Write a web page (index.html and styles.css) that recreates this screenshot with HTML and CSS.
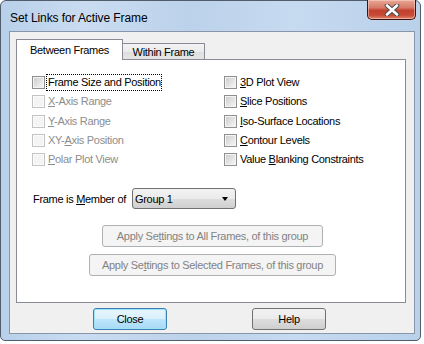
FILE: index.html
```html
<!DOCTYPE html>
<html lang="en">

<head>
    <meta charset="UTF-8">
    <meta name="viewport" content="width=device-width, initial-scale=1.0">
    <title>Set Links for Active Frame</title>
    <link rel="stylesheet" href="styles.css">
</head>

<body>

    <div class="janela">
        <div class="barra-titulo">
            <span class="titulo">Set Links for Active Frame</span>
            <div class="botao-fechar-janela">
                <svg width="20" height="12" viewBox="0 0 20 12">
                    <path d="M5 1.5 L15 10.5 M15 1.5 L5 10.5" stroke="#4a4a4a" stroke-width="4.6" stroke-linecap="round" />
                    <path d="M5 1.5 L15 10.5 M15 1.5 L5 10.5" stroke="#ffffff" stroke-width="2.6" stroke-linecap="round" />
                </svg>
            </div>
        </div>

        <div class="cliente">
            <div class="abas">
                <div class="aba ativa">Between Frames</div>
                <div class="aba">Within Frame</div>
            </div>

            <div class="painel">
                <div class="opcoes">
                    <div class="coluna">
                        <label class="opcao">
                            <span class="caixa"></span>
                            <span class="texto foco">Frame Size and Position</span>
                        </label>
                        <label class="opcao desativada">
                            <span class="caixa"></span>
                            <span class="texto"><u>X</u>-Axis Range</span>
                        </label>
                        <label class="opcao desativada">
                            <span class="caixa"></span>
                            <span class="texto"><u>Y</u>-Axis Range</span>
                        </label>
                        <label class="opcao desativada">
                            <span class="caixa"></span>
                            <span class="texto">XY-<u>A</u>xis Position</span>
                        </label>
                        <label class="opcao desativada">
                            <span class="caixa"></span>
                            <span class="texto"><u>P</u>olar Plot View</span>
                        </label>
                    </div>
                    <div class="coluna">
                        <label class="opcao">
                            <span class="caixa"></span>
                            <span class="texto"><u>3</u>D Plot View</span>
                        </label>
                        <label class="opcao">
                            <span class="caixa"></span>
                            <span class="texto"><u>S</u>lice Positions</span>
                        </label>
                        <label class="opcao">
                            <span class="caixa"></span>
                            <span class="texto"><u>I</u>so-Surface Locations</span>
                        </label>
                        <label class="opcao">
                            <span class="caixa"></span>
                            <span class="texto"><u>C</u>ontour Levels</span>
                        </label>
                        <label class="opcao">
                            <span class="caixa"></span>
                            <span class="texto">Value <u>B</u>lanking Constraints</span>
                        </label>
                    </div>
                </div>

                <div class="membro">
                    <span class="rotulo">Frame is <u>M</u>ember of</span>
                    <div class="seletor">
                        <span>Group 1</span>
                        <span class="seta"></span>
                    </div>
                </div>

                <div class="aplicar">
                    <div class="botao desativado largura-1">Apply Se<u>t</u>tings to All Frames, of this group</div>
                    <div class="botao desativado largura-2">Apply Se<u>t</u>tings to Selected Frames, of this group</div>
                </div>
            </div>

            <div class="rodape">
                <div class="botao padrao">Close</div>
                <div class="botao">Help</div>
            </div>
        </div>
    </div>

</body>

</html>
```

FILE: styles.css
```css
html {
    background-color: #ffffff;
}

body {
    margin: 0;
    font-family: 'Liberation Sans', Arial, sans-serif;
    font-size: 11px;
    letter-spacing: -0.3px;
    color: #000000;
}

u {
    text-decoration: underline;
    text-underline-offset: 1px;
}

.janela {
    width: 421px;
    height: 341px;
    box-sizing: border-box;
    border: 1px solid #4f5d6c;
    border-radius: 6px 6px 5px 5px;
    background: linear-gradient(to right, #b9d0ea 0%, #c9dcf1 20%, #bcd2ea 45%, #c6daf0 70%, #bad1ea 100%);
    display: flex;
    flex-direction: column;
}

.barra-titulo {
    height: 30px;
    display: flex;
    justify-content: space-between;
    align-items: flex-start;
    padding: 0 4px 0 9px;
    flex-shrink: 0;
}

.titulo {
    font-size: 12px;
    letter-spacing: -0.1px;
    line-height: 14px;
    padding-top: 10px;
    color: #000000;
}

.botao-fechar-janela {
    width: 49px;
    height: 20px;
    margin-top: -1px;
    box-sizing: border-box;
    border: 1px solid #3b1410;
    border-top: none;
    border-radius: 0 0 5px 5px;
    background: linear-gradient(to bottom, #e9a798 0%, #d77b68 40%, #c2402e 55%, #c84a36 80%, #e1876f 100%);
    box-shadow: inset 0 0 0 1px rgba(255, 220, 210, 0.5);
    display: flex;
    align-items: center;
    justify-content: center;
}

.cliente {
    flex: 1;
    margin: 0 5px 6px 8px;
    border: 1px solid #8796a8;
    background-color: #f0f0f0;
    padding: 7px 8px 0 6px;
    display: flex;
    flex-direction: column;
}

.abas {
    display: flex;
    align-items: flex-end;
    margin-bottom: -1px;
    position: relative;
    z-index: 1;
}

.aba {
    box-sizing: border-box;
    width: 83px;
    height: 16px;
    margin-left: -1px;
    margin-bottom: 1px;
    border: 1px solid #898c95;
    border-bottom: none;
    background: linear-gradient(to bottom, #f3f3f3 0%, #ebebeb 50%, #dedede 51%, #e5e5e5 100%);
    display: flex;
    align-items: center;
    justify-content: center;
    padding-top: 1px;
}

.aba.ativa {
    width: 107px;
    height: 21px;
    margin-left: 0;
    margin-bottom: 0;
    background: #ffffff;
    padding-top: 0;
    padding-bottom: 1px;
}

.painel {
    height: 244px;
    box-sizing: border-box;
    border: 1px solid #898c95;
    background-color: #ffffff;
}

.opcoes {
    display: grid;
    grid-template-columns: 192px auto;
    margin-top: 13px;
    padding-left: 15px;
}

.opcao {
    display: flex;
    align-items: center;
    height: 19.25px;
}

.caixa {
    width: 13px;
    height: 13px;
    box-sizing: border-box;
    border: 1px solid #8e8f8f;
    background: linear-gradient(135deg, #cacaca 0%, #e6e6e6 60%, #f7f7f7 100%);
    box-shadow: inset 0 0 0 1px #f4f4f4;
    flex-shrink: 0;
}

.texto {
    margin-left: 1px;
    padding: 1px 0 2px 1px;
    border: 1px dotted transparent;
    line-height: 12px;
}

.texto.foco {
    border-color: #000000;
}

.desativada .texto {
    color: #8d8d8d;
}

.desativada .caixa {
    border-color: #c3c3c3;
    background: #f4f4f4;
    box-shadow: inset 0 0 0 1px #fbfbfb;
}

.membro {
    display: flex;
    align-items: center;
    margin-top: 19px;
    padding-left: 16px;
}

.rotulo {
    width: 99px;
}

.seletor {
    width: 104px;
    height: 21px;
    box-sizing: border-box;
    border: 1px solid #707070;
    border-radius: 3px;
    background: linear-gradient(to bottom, #f2f2f2 0%, #ebebeb 50%, #dddddd 51%, #cfcfcf 100%);
    display: flex;
    align-items: center;
    justify-content: space-between;
    padding: 0 7px 0 2px;
}

.seta {
    width: 0;
    height: 0;
    border-left: 3.5px solid transparent;
    border-right: 3.5px solid transparent;
    border-top: 4px solid #000000;
}

.aplicar {
    display: flex;
    flex-direction: column;
    align-items: center;
    gap: 7px;
    margin-top: 16px;
    padding-left: 3px;
}

.botao {
    width: 74px;
    height: 22px;
    box-sizing: border-box;
    border: 1px solid #707070;
    border-radius: 3px;
    background: linear-gradient(to bottom, #f2f2f2 0%, #ebebeb 50%, #dddddd 51%, #cfcfcf 100%);
    display: flex;
    align-items: center;
    justify-content: center;
}

.botao.desativado {
    border-color: #adb2b5;
    background: #f4f4f4;
    color: #838383;
}

.largura-1 {
    width: 221px;
}

.largura-2 {
    width: 247px;
}

.botao.padrao {
    border-color: #3c7fb1;
    background: linear-gradient(to bottom, #e8f5fc 0%, #d9f0fc 50%, #bee6fd 51%, #a7d9f5 100%);
    box-shadow: inset 0 0 0 1px #9fe3fb;
}

.rodape {
    display: flex;
    justify-content: center;
    gap: 85px;
    margin-top: 5px;
    padding-right: 3px;
}
```
